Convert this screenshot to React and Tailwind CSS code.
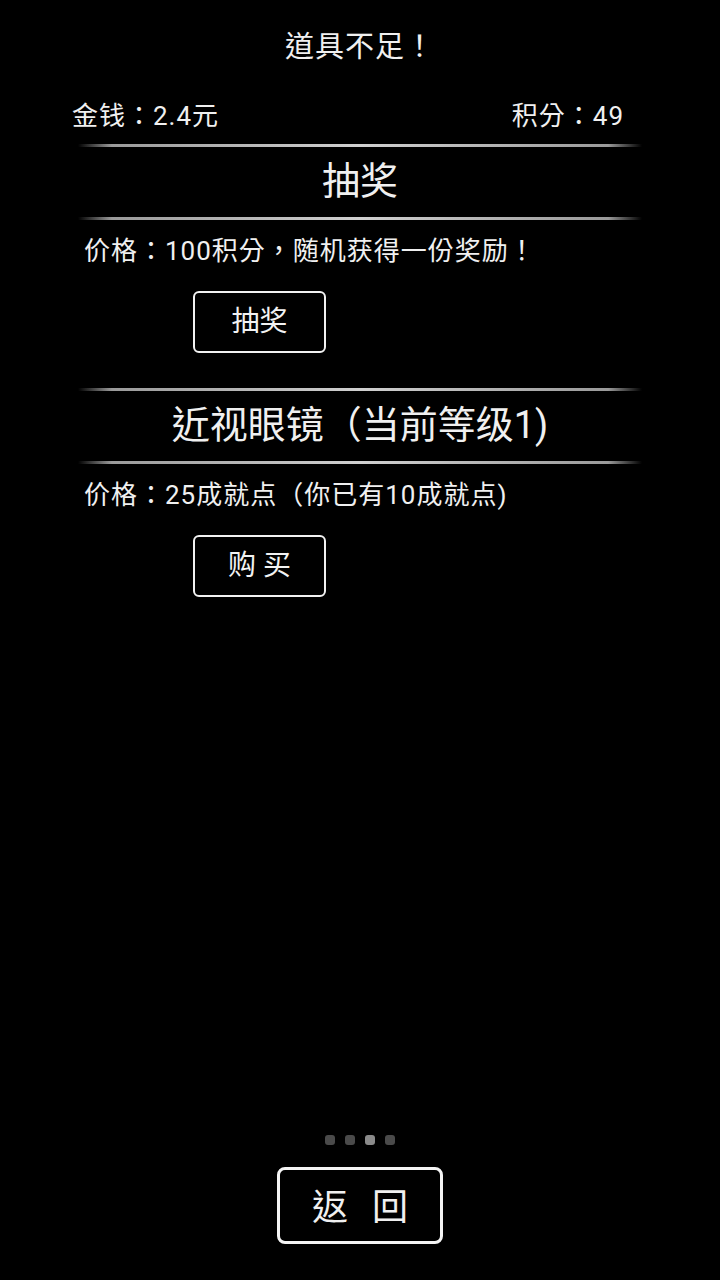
import React from "react";

const Divider = () => (
  <div className="mx-[78px] h-[3px] bg-[linear-gradient(90deg,transparent,#9a9a9a_6%,#d0d0d0_50%,#9a9a9a_94%,transparent)]" />
);

const OutlineButton = ({ children }) => (
  <button className="ml-[193px] flex h-[62px] w-[133px] items-center justify-center rounded-[6px] border-2 border-[#f2f2f2] bg-black text-[28px] text-[#f2f2f2]">
    {children}
  </button>
);

const ShopItem = ({ title, price, action }) => (
  <section>
    <Divider />
    <h2 className="flex h-[70px] items-center justify-center pb-[2px] text-[38px] font-normal">{title}</h2>
    <Divider />
    <p className="flex h-[64px] items-center pb-[2px] pl-[84px] text-[26px] tracking-[1px]">{price}</p>
    <div className="mt-[7px]">
      <OutlineButton>{action}</OutlineButton>
    </div>
  </section>
);

const App = () => {
  return (
    <div
      className="flex h-[1280px] w-[720px] flex-col bg-black text-[#f0f0f0] [text-spacing-trim:space-all]"
      style={{ fontFamily: 'Roboto, "Noto Sans CJK TC", "Noto Sans", sans-serif' }}
    >
      <div className="flex h-[92px] items-center justify-center pt-[4px] text-[29px] tracking-[1px]">道具不足！</div>

      <div className="flex h-[46px] items-center justify-between pt-[2px] pl-[72px] pr-[96px] text-[26px] tracking-[1px]">
        <span>金钱：2.4元</span>
        <span>积分：49</span>
      </div>

      <div className="mt-[6px]">
        <ShopItem title="抽奖" price="价格：100积分，随机获得一份奖励！" action="抽奖" />
      </div>

      <div className="mt-[35px]">
        <ShopItem title="近视眼镜（当前等级1)" price="价格：25成就点（你已有10成就点)" action="购 买" />
      </div>

      <div className="mt-auto flex flex-col items-center pb-[36px]">
        <div className="flex gap-[10px]">
          <span className="h-[10px] w-[10px] rounded-[3px] bg-[#4a4a4a]" />
          <span className="h-[10px] w-[10px] rounded-[3px] bg-[#4a4a4a]" />
          <span className="h-[10px] w-[10px] rounded-[3px] bg-[#8a8a8a]" />
          <span className="h-[10px] w-[10px] rounded-[3px] bg-[#4a4a4a]" />
        </div>
        <button className="mt-[22px] flex h-[77px] w-[166px] items-center justify-center gap-[24px] rounded-[8px] border-[3px] border-[#f5f5f5] bg-black pt-[4px] text-[36px] text-[#f0f0f0]">
          <span>返</span>
          <span>回</span>
        </button>
      </div>
    </div>
  );
};

export default App;
